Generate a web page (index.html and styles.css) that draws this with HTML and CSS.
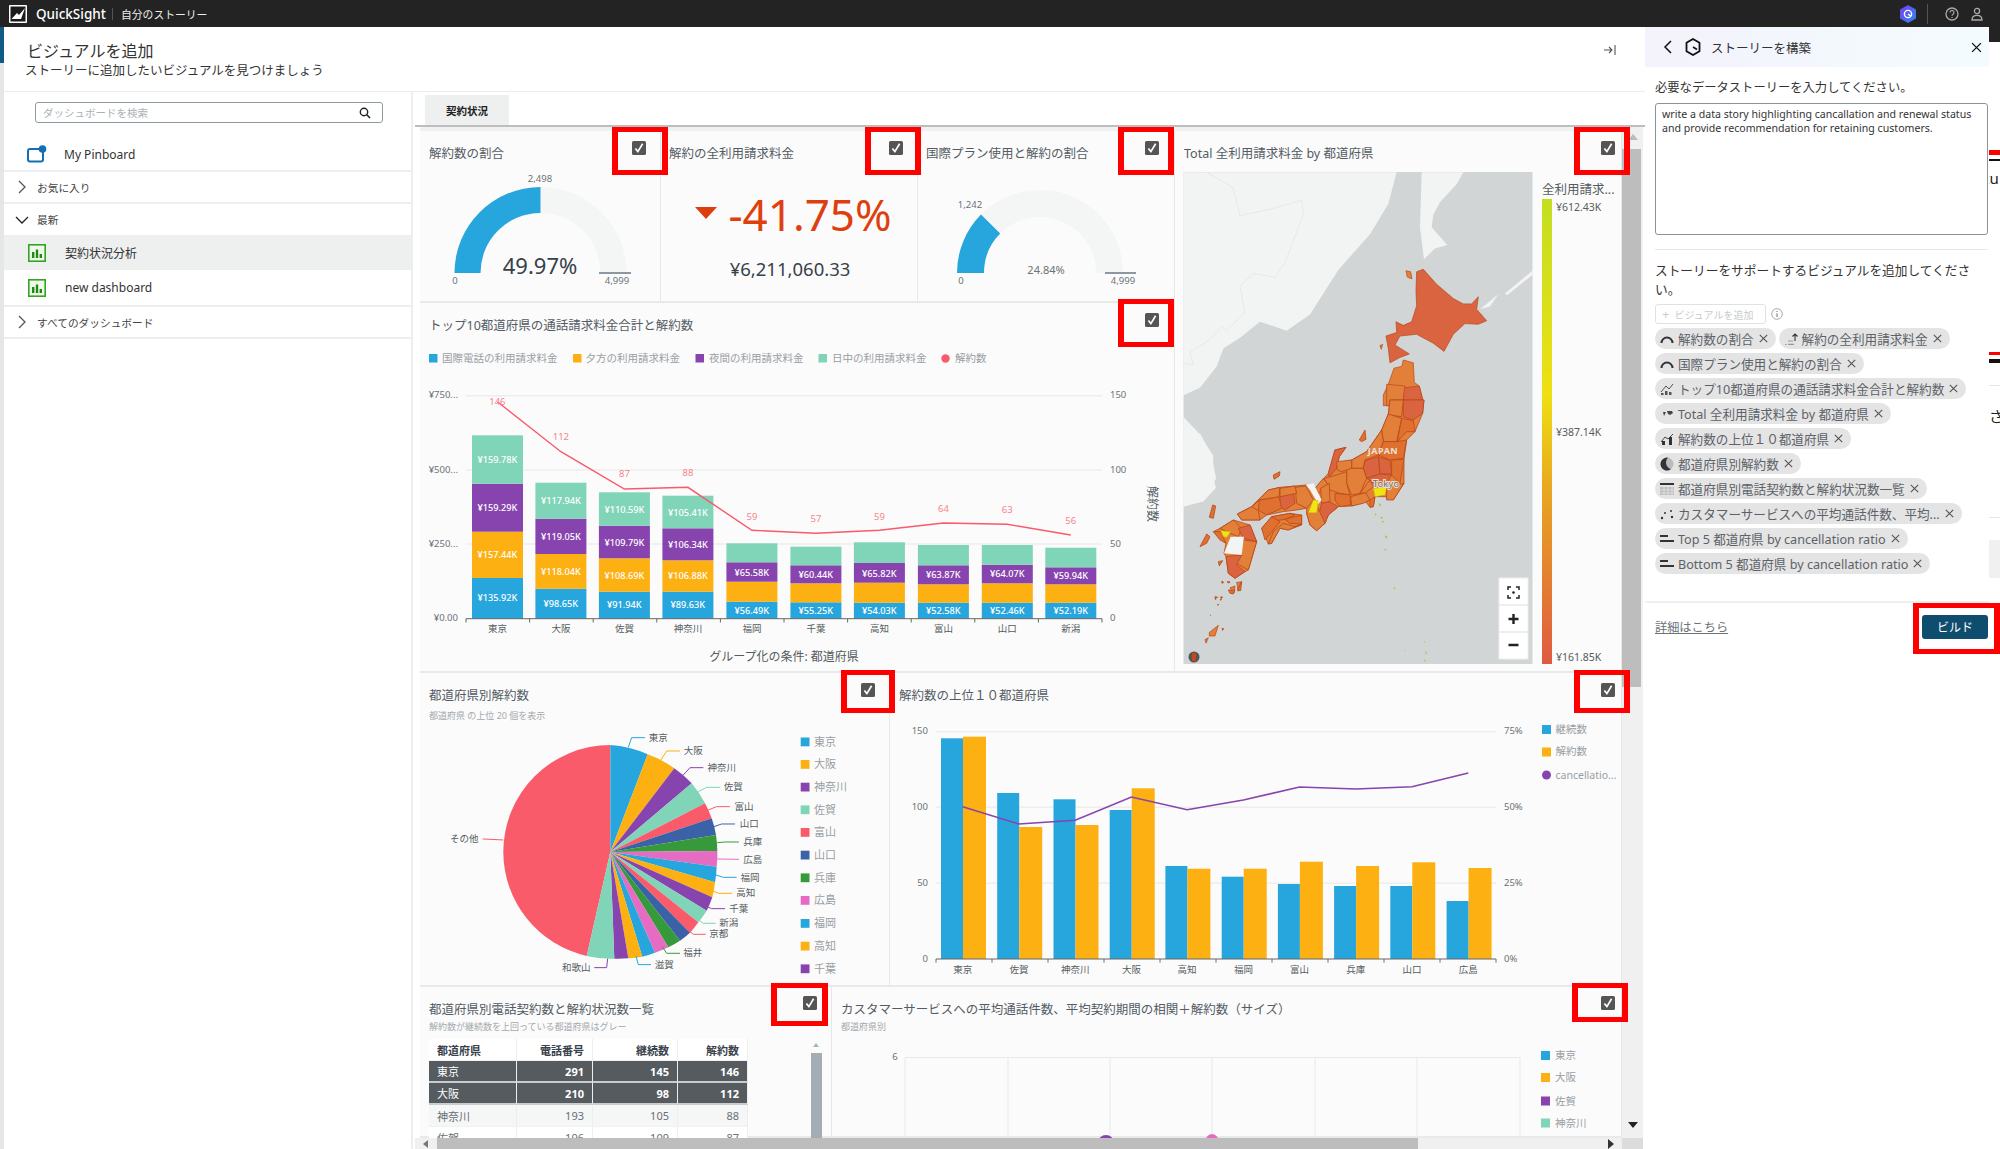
FILE: index.html
```html
<!DOCTYPE html>
<html lang="ja">
<head>
<meta charset="utf-8">
<title>QuickSight</title>
<link rel="stylesheet" href="styles.css">
</head>
<body>
<svg class="defs" width="0" height="0"><defs>
<symbol id="x" viewBox="0 0 9 9"><path d="M.8.8l7.4 7.4M8.2.8L.8 8.2" fill="none" stroke="#555" stroke-width="1.1"/></symbol>
<symbol id="chev" viewBox="0 0 10 14"><path d="M2 1l6 6-6 6" fill="none" stroke="#555" stroke-width="1.3"/></symbol>
<symbol id="chevd" viewBox="0 0 14 10"><path d="M1 2l6 6 6-6" fill="none" stroke="#222" stroke-width="1.3"/></symbol>
<symbol id="dash" viewBox="0 0 18 18"><rect x=".8" y=".8" width="16.4" height="16.4" fill="#f1f8ec" stroke="#2fa81e" stroke-width="1.6"/><path d="M4 8h2.4v6H4zM7.8 5.5h2.4V14H7.8zM11.6 10H14v4h-2.4z" fill="#1f8a12"/></symbol>
<symbol id="gauge" viewBox="0 0 14 14"><path d="M1.5 11A5.5 5.5 0 0 1 12.5 11" fill="none" stroke="#333" stroke-width="2"/></symbol>
<symbol id="hbars" viewBox="0 0 14 14"><path d="M0 3h8v2H0zM0 8h14v2H0z" fill="#333"/></symbol>
<symbol id="check" viewBox="0 0 14 14"><rect width="14" height="14" rx="1.6" fill="#555"/><path d="M3.4 7.4l2.5 3.2L10.6 2.8" fill="none" stroke="#fff" stroke-width="1.7"/></symbol>
</defs></svg>

<div class="app">
  <header class="topbar">
    <svg class="logo" viewBox="0 0 18 18" width="18" height="18"><rect width="18" height="18" rx="1" fill="#fff"/><rect x="1.5" y="1.5" width="15" height="15" fill="#1b1b1b"/><path d="M2.5 14L8 8l2 2 6-7-4 11z" fill="#fff"/></svg>
    <span class="brand">QuickSight</span>
    <span class="bar-sep"></span>
    <span class="crumb">自分のストーリー</span>
    <span class="bar-fill"></span>
    <svg class="q-icon" viewBox="0 0 16 18" width="16" height="18"><defs><linearGradient id="qg" x1="0" y1="0" x2="1" y2="1"><stop offset="0" stop-color="#7a3cf0"/><stop offset="1" stop-color="#2a8bf0"/></linearGradient></defs><path d="M8 0l8 4.500v9L8 18l-8-4.500v-9z" fill="url(#qg)"/><circle cx="8" cy="9" r="3.600" fill="none" stroke="#fff" stroke-width="1.400"/><path d="M8 9l3 2.400" stroke="#fff" stroke-width="1.400"/></svg>
    <span class="bar-sep2"></span>
    <svg class="b-icon" viewBox="0 0 14 14" width="14" height="14"><circle cx="7" cy="7" r="6" fill="none" stroke="#aaa" stroke-width="1.300"/><path d="M5 5.400a2 2 0 1 1 3 1.800c-.7.400-1 .8-1 1.600M7 10v1" fill="none" stroke="#aaa" stroke-width="1.200"/></svg>
    <svg class="b-icon" viewBox="0 0 14 14" width="14" height="14"><circle cx="7" cy="4" r="2.600" fill="none" stroke="#aaa" stroke-width="1.300"/><path d="M2 13c0-3 2-4.600 5-4.600s5 1.600 5 4.600z" fill="none" stroke="#aaa" stroke-width="1.300"/></svg>
  </header>

  <div class="shell">
    <div class="edge"><div class="edge-blue"></div></div>

    <div class="workspace">
      <div class="head">
        <div>
          <h1>ビジュアルを追加</h1>
          <p>ストーリーに追加したいビジュアルを見つけましょう</p>
        </div>
        <svg class="collapse" viewBox="0 0 14 12" width="14" height="12"><path d="M1 6h8M6 3l3 3-3 3M12 1v10" fill="none" stroke="#555" stroke-width="1.100"/></svg>
      </div>

      <div class="body">
        <aside class="side">
          <div class="search">
            <span>ダッシュボードを検索</span>
            <svg viewBox="0 0 12 12" width="12" height="12"><circle cx="5" cy="5" r="3.700" fill="none" stroke="#222" stroke-width="1.400"/><path d="M7.800 7.800L11 11" stroke="#222" stroke-width="1.600"/></svg>
          </div>
          <div class="row row-pin">
            <svg class="ico" viewBox="0 0 20 18" width="20" height="18"><rect x="1" y="4" width="15" height="12.500" rx="2" fill="none" stroke="#146eb4" stroke-width="2"/><circle cx="15.500" cy="4" r="3.800" fill="#146eb4"/></svg>
            <span class="lg">My Pinboard</span>
          </div>
          <div class="row row-sec"><svg class="ch" width="10" height="14"><use href="#chev"/></svg><span>お気に入り</span></div>
          <div class="row row-sec row-open"><svg class="chd" width="14" height="10"><use href="#chevd"/></svg><span>最新</span></div>
          <div class="row row-dash is-sel"><svg class="ico" width="18" height="18"><use href="#dash"/></svg><span class="lg">契約状況分析</span></div>
          <div class="row row-dash row-end"><svg class="ico" width="18" height="18"><use href="#dash"/></svg><span class="lg">new dashboard</span></div>
          <div class="row row-sec"><svg class="ch" width="10" height="14"><use href="#chev"/></svg><span>すべてのダッシュボード</span></div>
        </aside>

        <main class="main">
          <div class="tabs"><div class="tab">契約状況</div></div>
          <div class="canvas">
            <div class="sheet">
              <div class="top">
                <div class="top-left">
                  <div class="kpis">
                    <section class="tile t-g1">
                      <h2>解約数の割合</h2>
                      <div class="pick p1"><svg width="14" height="14"><use href="#check"/></svg></div>
                      <svg class="chart" viewBox="420 162 241 139" width="241" height="139">
                        <path class="track" d="M540.500 187A86 86 0 0 1 626.500 273H600.500A60 60 0 0 0 540.500 213Z"/>
                        <path class="f-blue" d="M454.500 273A86 86 0 0 1 540.500 187V213A60 60 0 0 0 480.500 273Z"/>
                        <path class="endline" d="M599 273h32"/>
                        <text class="t-xs" x="540" y="179" text-anchor="middle" dy=".35em">2,498</text>
                        <text class="t-xs" x="455" y="281" text-anchor="middle" dy=".35em">0</text>
                        <text class="t-xs" x="617" y="281" text-anchor="middle" dy=".35em">4,999</text>
                        <text class="t-val" x="540" y="266" text-anchor="middle" dy=".35em">49.97%</text>
                      </svg>
                    </section>
                    <section class="tile t-g2">
                      <h2>解約の全利用請求料金</h2>
                      <div class="pick p2"><svg width="14" height="14"><use href="#check"/></svg></div>
                      <svg class="chart" viewBox="661 162 257 139" width="257" height="139">
                        <path class="f-down" d="M695 207h22l-11 12z"/>
                        <text class="t-kpi" x="810" y="216" text-anchor="middle" dy=".35em">-41.75%</text>
                        <text class="t-kpi2" x="790" y="270" text-anchor="middle" dy=".35em">¥6,211,060.33</text>
                      </svg>
                    </section>
                    <section class="tile t-g3">
                      <h2>国際プラン使用と解約の割合</h2>
                      <div class="pick p3"><svg width="14" height="14"><use href="#check"/></svg></div>
                      <svg class="chart" viewBox="918 162 257 139" width="257" height="139">
                        <path class="track" d="M981 214.600A83 83 0 0 1 1123 273H1096A56 56 0 0 0 1000.200 233.600Z"/>
                        <path class="f-blue" d="M957 273A83 83 0 0 1 981 214.600L1000.200 233.600A56 56 0 0 0 984 273Z"/>
                        <path class="endline" d="M1105 273h31"/>
                        <text class="t-xs" x="970" y="205" text-anchor="middle" dy=".35em">1,242</text>
                        <text class="t-xs" x="961" y="281" text-anchor="middle" dy=".35em">0</text>
                        <text class="t-xs" x="1123" y="281" text-anchor="middle" dy=".35em">4,999</text>
                        <text class="t-sm" x="1046" y="270" text-anchor="middle" dy=".35em">24.84%</text>
                      </svg>
                    </section>
                  </div>

                  <section class="tile t-combo">
                    <h2>トップ10都道府県の通話請求料金合計と解約数</h2>
                    <div class="pick p4"><svg width="14" height="14"><use href="#check"/></svg></div>
                    <svg class="chart" viewBox="420 334 755 338" width="755" height="338">
                      <g class="leg">
                        <rect class="f-blue" x="429" y="354" width="8.500" height="8.500"/><text x="442" y="358" dy=".35em">国際電話の利用請求料金</text>
                        <rect class="f-orange" x="573" y="354" width="8.500" height="8.500"/><text x="585.500" y="358" dy=".35em">夕方の利用請求料金</text>
                        <rect class="f-purple" x="695.500" y="354" width="8.500" height="8.500"/><text x="709" y="358" dy=".35em">夜間の利用請求料金</text>
                        <rect class="f-mint" x="818.500" y="354" width="8.500" height="8.500"/><text x="832" y="358" dy=".35em">日中の利用請求料金</text>
                        <circle class="f-red" cx="945.500" cy="358.500" r="4.200"/><text x="955" y="358" dy=".35em">解約数</text>
                      </g>
                      <path class="grid" d="M466 395.700H1102M466 470H1102M466 544H1102"/>
                      <g class="bar-set">
                        <rect class="f-blue" x="472" y="578" width="51" height="40.700"/><rect class="f-orange" x="472" y="531.700" width="51" height="46.300"/><rect class="f-purple" x="472" y="483.700" width="51" height="48"/><rect class="f-mint" x="472" y="435.300" width="51" height="48.400"/>
                        <rect class="f-blue" x="535.400" y="588.700" width="51" height="30"/><rect class="f-orange" x="535.400" y="554" width="51" height="34.700"/><rect class="f-purple" x="535.400" y="518.700" width="51" height="35.300"/><rect class="f-mint" x="535.400" y="482.700" width="51" height="36"/>
                        <rect class="f-blue" x="598.900" y="591.700" width="51" height="27"/><rect class="f-orange" x="598.900" y="558.300" width="51" height="33.400"/><rect class="f-purple" x="598.900" y="525.700" width="51" height="32.600"/><rect class="f-mint" x="598.900" y="492.300" width="51" height="33.400"/>
                        <rect class="f-blue" x="662.400" y="591.700" width="51" height="27"/><rect class="f-orange" x="662.400" y="560.300" width="51" height="31.400"/><rect class="f-purple" x="662.400" y="528.300" width="51" height="32"/><rect class="f-mint" x="662.400" y="495.700" width="51" height="32.600"/>
                        <rect class="f-blue" x="726.400" y="601.700" width="51" height="17"/><rect class="f-orange" x="726.400" y="581.700" width="51" height="20"/><rect class="f-purple" x="726.400" y="562.300" width="51" height="19.400"/><rect class="f-mint" x="726.400" y="543.300" width="51" height="19"/>
                        <rect class="f-blue" x="790.400" y="602.300" width="51" height="16.400"/><rect class="f-orange" x="790.400" y="583.300" width="51" height="19"/><rect class="f-purple" x="790.400" y="565.300" width="51" height="18"/><rect class="f-mint" x="790.400" y="546.700" width="51" height="18.600"/>
                        <rect class="f-blue" x="853.900" y="602.700" width="51" height="16"/><rect class="f-orange" x="853.900" y="582.700" width="51" height="20"/><rect class="f-purple" x="853.900" y="563" width="51" height="19.700"/><rect class="f-mint" x="853.900" y="542.300" width="51" height="20.700"/>
                        <rect class="f-blue" x="917.900" y="602.700" width="51" height="16"/><rect class="f-orange" x="917.900" y="584.300" width="51" height="18.400"/><rect class="f-purple" x="917.900" y="565.300" width="51" height="19"/><rect class="f-mint" x="917.900" y="545" width="51" height="20.300"/>
                        <rect class="f-blue" x="981.800" y="602.700" width="51" height="16"/><rect class="f-orange" x="981.800" y="583.300" width="51" height="19.400"/><rect class="f-purple" x="981.800" y="564.700" width="51" height="18.600"/><rect class="f-mint" x="981.800" y="545" width="51" height="19.700"/>
                        <rect class="f-blue" x="1045.300" y="602.700" width="51" height="16"/><rect class="f-orange" x="1045.300" y="584.300" width="51" height="18.400"/><rect class="f-purple" x="1045.300" y="567.300" width="51" height="17"/><rect class="f-mint" x="1045.300" y="547.700" width="51" height="19.600"/>
                      </g>
                      <g class="bar-lab" text-anchor="middle">
                        <text x="497.400" y="598" dy=".35em">¥135.92K</text><text x="497.400" y="555" dy=".35em">¥157.44K</text><text x="497.400" y="508" dy=".35em">¥159.29K</text><text x="497.400" y="460" dy=".35em">¥159.78K</text>
                        <text x="560.900" y="603.700" dy=".35em">¥98.65K</text><text x="560.900" y="571.700" dy=".35em">¥118.04K</text><text x="560.900" y="536.300" dy=".35em">¥119.05K</text><text x="560.900" y="501" dy=".35em">¥117.94K</text>
                        <text x="624.400" y="604.300" dy=".35em">¥91.94K</text><text x="624.400" y="575.300" dy=".35em">¥108.69K</text><text x="624.400" y="542.300" dy=".35em">¥109.79K</text><text x="624.400" y="509.300" dy=".35em">¥110.59K</text>
                        <text x="687.900" y="605" dy=".35em">¥89.63K</text><text x="687.900" y="576" dy=".35em">¥106.88K</text><text x="687.900" y="544.300" dy=".35em">¥106.34K</text><text x="687.900" y="512.700" dy=".35em">¥105.41K</text>
                        <text x="751.900" y="610.700" dy=".35em">¥56.49K</text><text x="751.900" y="572.300" dy=".35em">¥65.58K</text>
                        <text x="815.900" y="610.700" dy=".35em">¥55.25K</text><text x="815.900" y="574.700" dy=".35em">¥60.44K</text>
                        <text x="879.400" y="610.700" dy=".35em">¥54.03K</text><text x="879.400" y="573.300" dy=".35em">¥65.82K</text>
                        <text x="943.400" y="610.700" dy=".35em">¥52.58K</text><text x="943.400" y="574.700" dy=".35em">¥63.87K</text>
                        <text x="1007.300" y="610.700" dy=".35em">¥52.46K</text><text x="1007.300" y="574" dy=".35em">¥64.07K</text>
                        <text x="1070.800" y="610.700" dy=".35em">¥52.19K</text><text x="1070.800" y="576" dy=".35em">¥59.94K</text>
                      </g>
                      <polyline class="line-red" points="497.400,401.700 560.900,451.700 624.400,489 687.900,487.300 751.900,530.300 815.900,533.300 879.400,530.300 943.400,523 1007.300,524.300 1070.800,535"/>
                      <g class="line-lab" text-anchor="middle">
                        <text x="497.400" y="402" dy=".35em">146</text><text x="560.900" y="437" dy=".35em">112</text><text x="624.400" y="474" dy=".35em">87</text><text x="687.900" y="473" dy=".35em">88</text><text x="751.900" y="517" dy=".35em">59</text><text x="815.900" y="519" dy=".35em">57</text><text x="879.400" y="517" dy=".35em">59</text><text x="943.400" y="509" dy=".35em">64</text><text x="1007.300" y="510" dy=".35em">63</text><text x="1070.800" y="521" dy=".35em">56</text>
                      </g>
                      <path class="axis" d="M466 622.500v-3.800H1102v3.800M529.600 618.700v3.800M593.200 618.700v3.800M656.800 618.700v3.800M720.400 618.700v3.800M784 618.700v3.800M847.600 618.700v3.800M911.200 618.700v3.800M974.800 618.700v3.800M1038.400 618.700v3.800"/>
                      <g class="cat" text-anchor="middle">
                        <text x="497.400" y="629" dy=".35em">東京</text><text x="560.900" y="629" dy=".35em">大阪</text><text x="624.400" y="629" dy=".35em">佐賀</text><text x="687.900" y="629" dy=".35em">神奈川</text><text x="751.900" y="629" dy=".35em">福岡</text><text x="815.900" y="629" dy=".35em">千葉</text><text x="879.400" y="629" dy=".35em">高知</text><text x="943.400" y="629" dy=".35em">富山</text><text x="1007.300" y="629" dy=".35em">山口</text><text x="1070.800" y="629" dy=".35em">新潟</text>
                      </g>
                      <g class="t-xs" text-anchor="end">
                        <text x="458" y="395" dy=".35em">¥750...</text><text x="458" y="470" dy=".35em">¥500...</text><text x="458" y="544" dy=".35em">¥250...</text><text x="458" y="618" dy=".35em">¥0.00</text>
                      </g>
                      <g class="t-xs">
                        <text x="1110" y="395" dy=".35em">150</text><text x="1110" y="470" dy=".35em">100</text><text x="1110" y="544" dy=".35em">50</text><text x="1110" y="618" dy=".35em">0</text>
                      </g>
                      <text class="t-side" transform="translate(1152 504) rotate(90)" text-anchor="middle" dy=".35em">解約数</text>
                      <text class="t-group" x="784" y="657" text-anchor="middle" dy=".35em">グループ化の条件: 都道府県</text>
                    </svg>
                  </section>
                </div>

                <section class="tile t-map">
                  <h2>Total 全利用請求料金 by 都道府県</h2>
                  <div class="pick p5"><svg width="14" height="14"><use href="#check"/></svg></div>
                  <svg class="chart" viewBox="1175 162 447 510" width="447" height="510">
                    <defs>
                      <clipPath id="mapclip"><rect x="1183.300" y="172" width="349.400" height="492"/></clipPath>
                      <linearGradient id="heat" x1="0" y1="0" x2="0" y2="1"><stop offset="0" stop-color="#c3de22"/><stop offset=".42" stop-color="#eee011"/><stop offset=".62" stop-color="#e8a820"/><stop offset="1" stop-color="#e05a42"/></linearGradient>
                    </defs>
                    <g clip-path="url(#mapclip)">
                      <rect x="1183.300" y="172" width="349.400" height="492" fill="#d1d5d6"/>
                      <g transform="translate(1170 120) scale(.3333 .3571)">
                        <g class="land">
                          <path d="M30 146H680L655 235 600 320 505 420 420 545 350 590 270 565 210 610 160 640 140 690 90 750 30 775Z"/>
                          <path d="M755 146H880L860 180 810 230 790 265 785 300 832 350 795 360 762 390 750 300Z"/>
                          <path d="M930 530L985 488 960 522ZM1005 486L1090 420V432L1012 490Z"/>
                          <path d="M30 822L80 870 130 940 128 1000 138 1030 100 1068 30 1085Z"/>
                        </g>
                        <path class="border" d="M110 146L190 190 210 268 300 250 395 225 400 265 345 400 315 440 250 430 210 465 225 540 170 590 155 580 120 615 60 650 70 685 30 680"/>
                        <g class="pref">
                          <path class="p-red" d="M740 425L760 418 800 460 850 500 880 515 905 515 925 495 920 530 950 562 925 572 885 570 850 600 822 648 790 625 740 600 690 605 675 630 718 655 690 665 660 680 655 640 648 605 680 595 678 565 700 575 725 565 740 520 738 480Z"/>
                          <path class="p-org" d="M672 695L695 690 700 672 730 680 733 735 748 745 760 790 755 800 640 800 640 770 655 740Z"/>
                          <path class="p-red" d="M703 750L748 745 760 790 755 800 697 800Z"/>
                          <path class="p-org" d="M650 740L705 745 697 800 650 800Z"/>
                          <path class="p-org" d="M180 1310L195 1305 192 1325ZM200 1295L215 1293 205 1320ZM118 1435L145 1415 135 1445 118 1445ZM105 1455L115 1450 108 1465Z"/>
                          <path class="p-org" d="M630 632L638 628 634 642ZM708 422L722 425 726 445 712 440Z"/>
                        </g>
                        <g fill="#a7c52c">
                          <path d="M672 1310l5 1-3 3zM703 1484l4 1-2 3zM762 1460l4 1-2 3zM766 1486l5 8-4 2zM762 1510l6 4-3 4z"/>
                        </g>
                        <path fill="#c44a1c" d="M135 1340l4 2-3 3zM150 1340l6 2-5 5zM142 1355l6 1-5 5zM120 1385l4 2-3 2zM155 1422l8 3-6 6zM155 1290l5 1-3 3zM175 1292l6 2-4 2z"/>
                      </g>
                      <g transform="translate(1200 400) scale(.3333)">
                        <g class="land"><path d="M-60 100L0 100 35 165 48 235 25 285-60 310Z"/></g>
                        <g class="pref pref-c">
                          <path class="p-org" d="M570 0H672L668 40 645 95 620 120 612 178 612 250 580 300 555 290 525 290 520 320 510 322 497 305 455 318 415 320 385 345 375 370 350 392 330 375 320 340 320 325 290 330 250 335 200 345 180 360 125 360 112 342 155 320 205 270 240 262 285 258 318 255 345 265 372 235 385 220 405 150 438 142 418 170 412 190 455 180 500 155 545 90 565 42Z"/>
                          <path class="p-org" d="M60 385L100 360 150 375 170 425 145 510 135 515 105 535 85 520 78 470 72 460 78 430 40 395Z"/>
                          <path class="p-org" d="M185 385L215 350 270 340 305 345 305 375 265 390 240 385 215 430 205 432Z"/>
                          <path class="p-red" d="M610 0H672L668 40 640 60 610 50Z"/>
                          <path class="p-org" d="M570 0H610L605 50 565 45Z"/>
                          <path class="p-org" d="M565 42L605 55 590 125 550 125 545 90Z"/>
                          <path class="p-dk" d="M605 55L640 62 645 95 620 95 592 125Z"/>
                          <path class="p-org" d="M455 180L500 155 545 90 550 125 535 165 495 180 490 205 455 205Z"/>
                          <path class="p-dk" d="M550 125H592L620 120 610 175 570 180 535 165Z"/>
                          <path class="p-red" d="M535 170L570 182 575 222 540 222Z"/>
                          <path class="p-dk" d="M575 180L612 178 600 250 575 225Z"/>
                          <path class="p-red" d="M495 182L535 170 540 222 500 235 490 205Z"/>
                          <path class="p-org" d="M440 205H490L500 235 480 280 455 285 440 250Z"/>
                          <path class="p-red" d="M405 150L438 142 418 170 410 205 388 230 385 220Z"/>
                          <path class="p-org" d="M410 185L455 180 455 205 425 215 412 210Z"/>
                          <path class="p-org" d="M372 235L410 225 440 215 440 250 450 285 420 280 390 270Z"/>
                          <path class="p-org" d="M345 265L370 235 385 255 355 280Z"/>
                          <path class="p-org" d="M362 265L388 250 390 305 365 310Z"/>
                          <path class="p-dk" d="M405 280L450 285 452 315 420 320 405 300Z"/>
                          <path class="p-org" d="M452 290L497 278 510 300 490 310 455 318Z"/>
                          <path class="p-org" d="M480 280L510 240 520 260 497 278Z"/>
                          <path class="p-red" d="M500 235L540 222 575 225 560 250 520 250 510 240Z"/>
                          <path class="p-org" d="M560 265L612 250 580 300 560 300Z"/>
                          <path class="p-dk" d="M510 300L525 290 520 320 510 322Z"/>
                          <path class="p-red" d="M388 305L415 320 385 345 375 370 355 350 365 310Z"/>
                          <path class="p-org" d="M320 340L352 320 375 370 350 392 330 375Z"/>
                          <path class="p-org" d="M285 262L318 258 340 300 320 325 290 310Z"/>
                          <path class="p-red" d="M240 290L280 280 285 310 255 330 240 320Z"/>
                          <path class="p-dk" d="M178 300L237 290 245 325 200 345 175 330Z"/>
                          <path class="p-org" d="M155 320L205 270 240 262 237 290 178 300Z"/>
                          <path class="p-org" d="M240 265L285 258 290 280 240 290Z"/>
                          <path class="p-org" d="M112 342L155 320 175 332 180 360 125 360Z"/>
                          <path class="p-dk" d="M215 350L270 340 285 345 255 358 210 365Z"/>
                          <path class="p-dk" d="M185 385L215 350 240 365 195 420Z"/>
                          <path class="p-org" d="M205 432L220 395 250 370 285 380 305 372 265 390 240 385 215 430Z"/>
                          <path class="p-dk" d="M255 358L305 345 305 372 270 370Z"/>
                          <path class="p-org" d="M60 385L100 360 125 385 115 410 90 400Z"/>
                          <path class="p-dk" d="M40 395L62 395 78 430 60 420Z"/>
                          <path class="p-red" d="M115 385L150 375 170 425 130 415Z"/>
                          <path class="p-org" d="M130 420L170 425 145 510 110 490Z"/>
                          <path class="p-red" d="M78 470L125 465 110 495 135 515 105 535 85 520Z"/>
                          <path class="p-dk" d="M0 440L20 402 30 410 20 430ZM28 352L38 315 47 318 40 355ZM220 225L240 215 238 228 222 238ZM478 120L495 90 498 118 485 125ZM85 570H105L100 582 90 580ZM112 570L125 545 122 572Z"/>
                          <path class="p-dk" d="M55 485L68 482 58 498ZM45 590l8 2-8 4zM62 590l6 2-4 4zM65 545l6 2-5 3zM82 545l8 1-6 3z"/>
                        </g>
                        <g fill="#f3f4f4">
                          <path d="M318 255L340 250 365 300 355 312 330 270Z"/>
                          <path d="M92 410H132L125 465 72 460Z"/>
                        </g>
                        <g fill="#efe512" stroke="#d1a912" stroke-width="1.500">
                          <path d="M340 300L355 302 350 338 325 338Z"/>
                          <path d="M62 392L92 395 80 412 70 410Z"/>
                          <path d="M520 265L560 262 555 285 525 290Z"/>
                        </g>
                        <path fill="#a7c52c" d="M535 310l8 2-3 8zM525 340l5 2-4 6zM541 350l8 2-4 6zM546 362l6 2-4 6zM555 406l8 4-6 6zM553 446l6 2-3 5zM581 562l5 2-3 4z"/>
                      </g>
                      <text class="map-japan" x="1383" y="451" text-anchor="middle" dy=".35em">JAPAN</text>
                      <text class="map-tokyo" x="1386" y="484" text-anchor="middle" dy=".35em">Tokyo</text>
                      <circle cx="1194" cy="657" r="5.500" fill="#555"/>
                      <path d="M1192 653h4v8h-4z" fill="#c4481c"/>
                    </g>
                    <rect class="zoom-box" x="1499" y="578" width="29" height="81"/>
                    <path class="zoom-sep" d="M1499 605h29M1499 632h29"/>
                    <path class="zoom-ic" d="M1508 590v-3h3M1516 587h3v3M1519 595v3h-3M1511 598h-3v-3"/>
                    <circle cx="1513.500" cy="592.500" r="1.300" fill="#222"/>
                    <path class="zoom-big" d="M1513.500 614v10M1508.500 619h10M1508.500 645h10"/>
                    <rect x="1542" y="199" width="10" height="465" fill="url(#heat)"/>
                    <text class="t-legtitle" x="1542" y="190" dy=".35em">全利用請求...</text>
                    <g class="t-heat">
                      <text x="1556" y="207" dy=".35em">¥612.43K</text><text x="1556" y="432" dy=".35em">¥387.14K</text><text x="1556" y="657" dy=".35em">¥161.85K</text>
                    </g>
                  </svg>
                </section>
              </div>

              <div class="mid">
                <section class="tile t-pie">
                  <h2>都道府県別解約数</h2>
                  <p class="sub sub-pie">都道府県 の上位 20 個を表示</p>
                  <div class="pick p6"><svg width="14" height="14"><use href="#check"/></svg></div>
                  <svg class="chart" viewBox="420 725 469 261" width="469" height="261">
                    <path class="f-red" d="M610.300 852L586.700 956A107 107 0 0 1 503.300 852A107 107 0 0 1 610.300 745Z"/>
                    <path class="f-blue" d="M610.300 852V745A107 107 0 0 1 647.700 754.300Z"/>
                    <path class="f-orange" d="M610.300 852L647.700 754.300A107 107 0 0 1 674.300 768.300Z"/>
                    <path class="f-purple" d="M610.300 852L674.300 768.300A107 107 0 0 1 691.700 783.300Z"/>
                    <path class="f-mint" d="M610.300 852L691.700 783.300A107 107 0 0 1 705 803.300Z"/>
                    <path class="f-red" d="M610.300 852L705 803.300A107 107 0 0 1 711.700 818.300Z"/>
                    <path class="f-navy" d="M610.300 852L711.700 818.300A107 107 0 0 1 716 835Z"/>
                    <path class="f-green" d="M610.300 852L716 835A107 107 0 0 1 717.300 851Z"/>
                    <path class="f-pink" d="M610.300 852L717.300 851A107 107 0 0 1 716.700 866.700Z"/>
                    <path class="f-blue" d="M610.300 852L716.700 866.700A107 107 0 0 1 715 882.300Z"/>
                    <path class="f-orange" d="M610.300 852L715 882.300A107 107 0 0 1 712.300 897.300Z"/>
                    <path class="f-purple" d="M610.300 852L712.300 897.300A107 107 0 0 1 706.700 910.700Z"/>
                    <path class="f-mint" d="M610.300 852L706.700 910.700A107 107 0 0 1 698.300 922.300Z"/>
                    <path class="f-red" d="M610.300 852L698.300 922.300A107 107 0 0 1 690 932.700Z"/>
                    <path class="f-navy" d="M610.300 852L690 932.700A107 107 0 0 1 680 940.700Z"/>
                    <path class="f-green" d="M610.300 852L680 940.700A107 107 0 0 1 668.300 947.300Z"/>
                    <path class="f-pink" d="M610.300 852L668.300 947.300A107 107 0 0 1 655 952.700Z"/>
                    <path class="f-blue" d="M610.300 852L655 952.700A107 107 0 0 1 642.300 956.700Z"/>
                    <path class="f-orange" d="M610.300 852L642.300 956.700A107 107 0 0 1 628.300 958.300Z"/>
                    <path class="f-purple" d="M610.300 852L628.300 958.300A107 107 0 0 1 614.300 958.700Z"/>
                    <path class="f-mint" d="M610.300 852L614.300 958.700A107 107 0 0 1 586.700 956Z"/>
                    <g transform="translate(415 670) scale(.3333)" class="leaders">
                      <polyline class="s-blue" points="640,232 650,203 690,203"/>
                      <polyline class="s-orange" points="738,270 755,243 795,243"/>
                      <polyline class="s-purple" points="805,315 825,293 865,293"/>
                      <polyline class="s-mint" points="850,365 875,352 915,352"/>
                      <polyline class="s-red" points="880,420 905,410 945,410"/>
                      <polyline class="s-navy" points="897,470 920,462 960,462"/>
                      <polyline class="s-green" points="907,518 930,516 972,516"/>
                      <polyline class="s-pink" points="907,567 972,568"/>
                      <polyline class="s-blue" points="903,615 925,622 965,622"/>
                      <polyline class="s-orange" points="888,660 910,670 952,670"/>
                      <polyline class="s-purple" points="865,705 890,716 930,716"/>
                      <polyline class="s-mint" points="840,742 865,760 902,760"/>
                      <polyline class="s-red" points="812,775 835,793 872,793"/>
                      <polyline class="s-green" points="742,830 755,850 795,850"/>
                      <polyline class="s-blue" points="663,858 670,884 708,884"/>
                      <polyline class="s-purple" points="578,866 575,893 538,893"/>
                      <polyline class="s-red" points="265,510 203,507"/>
                    </g>
                    <g class="cat" text-anchor="middle">
                      <text x="658.300" y="737.300" dy=".35em">東京</text><text x="693.300" y="750.700" dy=".35em">大阪</text><text x="721.700" y="767.300" dy=".35em">神奈川</text><text x="733.300" y="786.700" dy=".35em">佐賀</text><text x="744" y="806.700" dy=".35em">富山</text><text x="749.300" y="823.700" dy=".35em">山口</text><text x="752.700" y="841.700" dy=".35em">兵庫</text><text x="752.700" y="859.300" dy=".35em">広島</text><text x="750" y="877.300" dy=".35em">福岡</text><text x="745.700" y="893" dy=".35em">高知</text><text x="738.700" y="908.300" dy=".35em">千葉</text><text x="728.700" y="922.700" dy=".35em">新潟</text><text x="718.700" y="934" dy=".35em">京都</text><text x="692.700" y="952.300" dy=".35em">福井</text><text x="664.300" y="964.300" dy=".35em">滋賀</text><text x="576.300" y="967.300" dy=".35em">和歌山</text><text x="464.300" y="838.700" dy=".35em">その他</text>
                    </g>
                    <g class="leg leg-lg">
                      <rect class="f-blue" x="800.700" y="737.500" width="8.800" height="8.800"/><text x="814" y="741.700" dy=".35em">東京</text>
                      <rect class="f-orange" x="800.700" y="760" width="8.800" height="8.800"/><text x="814" y="764.300" dy=".35em">大阪</text>
                      <rect class="f-purple" x="800.700" y="782.700" width="8.800" height="8.800"/><text x="814" y="787" dy=".35em">神奈川</text>
                      <rect class="f-mint" x="800.700" y="805.400" width="8.800" height="8.800"/><text x="814" y="809.700" dy=".35em">佐賀</text>
                      <rect class="f-red" x="800.700" y="828" width="8.800" height="8.800"/><text x="814" y="832.300" dy=".35em">富山</text>
                      <rect class="f-navy" x="800.700" y="850.700" width="8.800" height="8.800"/><text x="814" y="855" dy=".35em">山口</text>
                      <rect class="f-green" x="800.700" y="873.400" width="8.800" height="8.800"/><text x="814" y="877.700" dy=".35em">兵庫</text>
                      <rect class="f-pink" x="800.700" y="896" width="8.800" height="8.800"/><text x="814" y="900.300" dy=".35em">広島</text>
                      <rect class="f-blue" x="800.700" y="919" width="8.800" height="8.800"/><text x="814" y="923.300" dy=".35em">福岡</text>
                      <rect class="f-orange" x="800.700" y="941.700" width="8.800" height="8.800"/><text x="814" y="946" dy=".35em">高知</text>
                      <rect class="f-purple" x="800.700" y="964.400" width="8.800" height="8.800"/><text x="814" y="968.700" dy=".35em">千葉</text>
                    </g>
                  </svg>
                </section>

                <section class="tile t-bars">
                  <h2>解約数の上位１０都道府県</h2>
                  <div class="pick p7"><svg width="14" height="14"><use href="#check"/></svg></div>
                  <svg class="chart" viewBox="890 704 732 282" width="732" height="282">
                    <path class="grid" d="M936 731.700H1496M936 807.300H1496M936 883.300H1496"/>
                    <g class="f-blue">
                      <rect x="941" y="738.300" width="22" height="220.700"/><rect x="997.200" y="793" width="22" height="166"/><rect x="1053.500" y="799.300" width="22" height="159.700"/><rect x="1109.700" y="810" width="22" height="149"/><rect x="1165.400" y="866" width="22" height="93"/><rect x="1221.700" y="876.700" width="22" height="82.300"/><rect x="1277.900" y="884" width="22" height="75"/><rect x="1334.100" y="886" width="22" height="73"/><rect x="1390.300" y="886" width="22" height="73"/><rect x="1446.600" y="901" width="22" height="58"/>
                    </g>
                    <g class="f-orange">
                      <rect x="963" y="736.700" width="23" height="222.300"/><rect x="1019.200" y="827" width="23" height="132"/><rect x="1075.500" y="825" width="23" height="134"/><rect x="1131.700" y="788.300" width="23" height="170.700"/><rect x="1187.400" y="868.700" width="23" height="90.300"/><rect x="1243.700" y="868.700" width="23" height="90.300"/><rect x="1299.900" y="861.700" width="23" height="97.300"/><rect x="1356.100" y="866" width="23" height="93"/><rect x="1412.300" y="862.300" width="23" height="96.700"/><rect x="1468.600" y="868" width="23" height="91"/>
                    </g>
                    <polyline class="line-purple" points="962.700,806.700 1018.900,824 1075.200,820.300 1131.400,797 1187.100,809.700 1243.400,800 1299.600,787 1355.800,789 1412,786.700 1468.300,773"/>
                    <path class="axis" d="M936 962.500v-3.500H1496v3.500M992 959v3.500M1048 959v3.500M1104 959v3.500M1160 959v3.500M1216 959v3.500M1272 959v3.500M1328 959v3.500M1384 959v3.500M1440 959v3.500"/>
                    <g class="cat" text-anchor="middle">
                      <text x="962.700" y="970" dy=".35em">東京</text><text x="1018.900" y="970" dy=".35em">佐賀</text><text x="1075.200" y="970" dy=".35em">神奈川</text><text x="1131.400" y="970" dy=".35em">大阪</text><text x="1187.100" y="970" dy=".35em">高知</text><text x="1243.400" y="970" dy=".35em">福岡</text><text x="1299.600" y="970" dy=".35em">富山</text><text x="1355.800" y="970" dy=".35em">兵庫</text><text x="1412" y="970" dy=".35em">山口</text><text x="1468.300" y="970" dy=".35em">広島</text>
                    </g>
                    <g class="t-xs" text-anchor="end">
                      <text x="928" y="731" dy=".35em">150</text><text x="928" y="807" dy=".35em">100</text><text x="928" y="883" dy=".35em">50</text><text x="928" y="959" dy=".35em">0</text>
                    </g>
                    <g class="t-xs">
                      <text x="1504" y="731" dy=".35em">75%</text><text x="1504" y="807" dy=".35em">50%</text><text x="1504" y="883" dy=".35em">25%</text><text x="1504" y="959" dy=".35em">0%</text>
                    </g>
                    <g class="leg">
                      <rect class="f-blue" x="1542" y="725" width="9" height="9"/><text x="1555.500" y="729.300" dy=".35em">継続数</text>
                      <rect class="f-orange" x="1542" y="747.500" width="9" height="9"/><text x="1555.500" y="751.700" dy=".35em">解約数</text>
                      <circle class="f-purple" cx="1546.500" cy="775" r="4.500"/><text x="1555.500" y="775" dy=".35em">cancellatio...</text>
                    </g>
                  </svg>
                </section>
              </div>

              <div class="low">
                <section class="tile t-table">
                  <h2>都道府県別電話契約数と解約状況数一覧</h2>
                  <p class="sub">解約数が継続数を上回っている都道府県はグレー</p>
                  <div class="pick p8"><svg width="14" height="14"><use href="#check"/></svg></div>
                  <div class="table-wrap">
                    <table class="grid-table">
                      <colgroup><col class="c1"><col class="c2"><col class="c3"><col class="c4"></colgroup>
                      <thead><tr><th>都道府県</th><th>電話番号</th><th>継続数</th><th>解約数</th></tr></thead>
                      <tbody>
                        <tr class="dark"><td>東京</td><td>291</td><td>145</td><td>146</td></tr>
                        <tr class="dark"><td>大阪</td><td>210</td><td>98</td><td>112</td></tr>
                        <tr class="alt"><td>神奈川</td><td>193</td><td>105</td><td>88</td></tr>
                        <tr><td>佐賀</td><td>196</td><td>109</td><td>87</td></tr>
                      </tbody>
                    </table>
                    <div class="table-scroll"><i></i><b></b></div>
                  </div>
                </section>
                <section class="tile t-scatter">
                  <h2>カスタマーサービスへの平均通話件数、平均契約期間の相関＋解約数（サイズ）</h2>
                  <p class="sub">都道府県別</p>
                  <div class="pick p9"><svg width="14" height="14"><use href="#check"/></svg></div>
                  <svg class="chart" viewBox="832 1038 790 100" width="790" height="100">
                    <path class="grid grid-thin" d="M905 1057.500H1520M905 1057.500V1138M1008 1057.500V1138M1110 1057.500V1138M1212 1057.500V1138M1315 1057.500V1138M1417 1057.500V1138M1520 1057.500V1138"/>
                    <text class="t-xs" x="895" y="1057" text-anchor="middle" dy=".35em">6</text>
                    <circle class="f-purple" cx="1106" cy="1143" r="8"/>
                    <circle class="f-pink" cx="1212" cy="1140" r="6"/>
                    <g class="leg">
                      <rect class="f-blue" x="1541" y="1051" width="9" height="9"/><text x="1555" y="1055" dy=".35em">東京</text>
                      <rect class="f-orange" x="1541" y="1073" width="9" height="9"/><text x="1555" y="1077" dy=".35em">大阪</text>
                      <rect class="f-purple" x="1541" y="1096.500" width="9" height="9"/><text x="1555" y="1101" dy=".35em">佐賀</text>
                      <rect class="f-mint" x="1541" y="1118.500" width="9" height="9"/><text x="1555" y="1123" dy=".35em">神奈川</text>
                    </g>
                  </svg>
                </section>
              </div>
            </div>
            <div class="vscroll">
              <i class="v-up"></i>
              <div class="v-thumb"></div>
              <i class="v-down"></i>
            </div>
          </div>
          <div class="hscroll">
            <i class="h-left"></i>
            <div class="h-thumb"></div>
            <i class="h-right"></i>
            <div class="h-corner"></div>
          </div>
        </main>
      </div>
    </div>

    <aside class="story">
      <div class="story-head">
        <svg class="back" viewBox="0 0 10 14" width="10" height="14"><path d="M8 1L2 7l6 6" fill="none" stroke="#111" stroke-width="1.500"/></svg>
        <svg class="hex" viewBox="0 0 16 18" width="16" height="18"><path d="M8 1l6.500 3.700v8.600L8 17l-6.500-3.700V4.700z" fill="none" stroke="#111" stroke-width="1.800"/><path d="M8 9l4 2.500" stroke="#111" stroke-width="1.600"/></svg>
        <span class="story-title">ストーリーを構築</span>
        <svg class="close" viewBox="0 0 10 10" width="11" height="11"><path d="M1 1l8 8M9 1L1 9" fill="none" stroke="#111" stroke-width="1.200"/></svg>
      </div>
      <div class="story-body">
        <label class="story-label" for="prompt">必要なデータストーリーを入力してください。</label>
        <textarea id="prompt" class="prompt" readonly>write a data story highlighting cancallation and renewal status and provide recommendation for retaining customers.</textarea>
        <hr class="story-rule">
        <p class="story-label2">ストーリーをサポートするビジュアルを追加してください。</p>
        <div class="add-line">
          <span class="add-btn"><b>+</b>ビジュアルを追加</span>
          <svg viewBox="0 0 12 12" width="12" height="12"><circle cx="6" cy="6" r="5.300" fill="none" stroke="#aaa"/><path d="M6 3v1M6 5.300V9" stroke="#888" stroke-width="1.200"/></svg>
        </div>
        <div class="chips">
          <span class="chip"><svg class="ci" width="14" height="14"><use href="#gauge"/></svg>解約数の割合<svg class="cx" width="9" height="9"><use href="#x"/></svg></span>
          <span class="chip"><svg class="ci" viewBox="0 0 14 14" width="14" height="14"><path d="M1 13h1.500v-1H1zM4 13h6v-1.200H4zM4 9.500h5V8.500H4z" fill="#999"/><path d="M11 9V2M8.500 4.500L11 2l2.500 2.500" fill="none" stroke="#333" stroke-width="1.100"/></svg>解約の全利用請求料金<svg class="cx" width="9" height="9"><use href="#x"/></svg></span>
          <span class="chip"><svg class="ci" width="14" height="14"><use href="#gauge"/></svg>国際プラン使用と解約の割合<svg class="cx" width="9" height="9"><use href="#x"/></svg></span>
          <span class="chip"><svg class="ci" viewBox="0 0 14 14" width="14" height="14"><path d="M1 10L6 4l3 3 4-5" fill="none" stroke="#555" stroke-width="1"/><path d="M1 11h2.500v2H1zM5 9h2.500v4H5zM9 10h2.500v3H9z" fill="#555"/></svg>トップ10都道府県の通話請求料金合計と解約数<svg class="cx" width="9" height="9"><use href="#x"/></svg></span>
          <span class="chip"><svg class="ci" viewBox="0 0 14 14" width="14" height="14"><path d="M1 5l2 0 1 4 2-4zM7 4h5l1 2-3 2-2-1z" fill="#444"/></svg>Total 全利用請求料金 by 都道府県<svg class="cx" width="9" height="9"><use href="#x"/></svg></span>
          <span class="chip"><svg class="ci" viewBox="0 0 14 14" width="14" height="14"><path d="M1 10L5 5l3 2 5-5" fill="none" stroke="#444"/><path d="M2 9h3v4H2zM9 5h3v8H9z" fill="#333"/></svg>解約数の上位１０都道府県<svg class="cx" width="9" height="9"><use href="#x"/></svg></span>
          <span class="chip"><svg class="ci" viewBox="0 0 14 14" width="14" height="14"><circle cx="7" cy="7" r="6.500" fill="#bbb"/><path d="M8 .6A6.500 6.500 0 1 0 11 12.200 7 7 0 0 1 8 .6z" fill="#333"/></svg>都道府県別解約数<svg class="cx" width="9" height="9"><use href="#x"/></svg></span>
          <span class="chip"><svg class="ci" viewBox="0 0 14 14" width="14" height="14"><path d="M0 1h14v2H0z" fill="#333"/><path d="M0 5h14v8H0z" fill="#bdbdbd"/><path d="M4 5v8M8 5v8M12 5v8M0 8h14M0 11h14" stroke="#e4e4e4" stroke-width=".8"/></svg>都道府県別電話契約数と解約状況数一覧<svg class="cx" width="9" height="9"><use href="#x"/></svg></span>
          <span class="chip"><svg class="ci" viewBox="0 0 14 14" width="14" height="14"><circle cx="2" cy="11" r="1.200" fill="#333"/><circle cx="5" cy="6" r="1" fill="#333"/><circle cx="11" cy="4" r="1" fill="#333"/><circle cx="12" cy="10" r="1.200" fill="#333"/></svg>カスタマーサービスへの平均通話件数、平均...<svg class="cx" width="9" height="9"><use href="#x"/></svg></span>
          <span class="chip"><svg class="ci" width="14" height="14"><use href="#hbars"/></svg>Top 5 都道府県 by cancellation ratio<svg class="cx" width="9" height="9"><use href="#x"/></svg></span>
          <span class="chip"><svg class="ci" width="14" height="14"><use href="#hbars"/></svg>Bottom 5 都道府県 by cancellation ratio<svg class="cx" width="9" height="9"><use href="#x"/></svg></span>
        </div>
      </div>
      <div class="story-foot">
        <a class="more">詳細はこちら</a>
        <button class="build">ビルド</button>
      </div>
    </aside>

    <div class="rim">
      <div class="rim-cap"></div>
      <div class="rim-red"></div>
      <div class="rim-black"></div>
      <div class="rim-tu">tu</div>
      <div class="rim-red rim-red2"></div>
      <div class="rim-black rim-black2"></div>
      <div class="rim-line"></div>
      <div class="rim-sa">さ</div>
      <div class="rim-line rim-line2"></div>
      <div class="rim-box"></div>
    </div>
  </div>
  <div class="pick-build"></div>
</div>
</body>
</html>
```

FILE: styles.css
```css
* { box-sizing: border-box; }
html, body { margin: 0; padding: 0; background: #fff; }
body { font-family: "Noto Sans", "Noto Sans CJK JP", sans-serif; color: #333; }
.defs { position: absolute; }
.app { position: relative; width: 2000px; height: 1149px; overflow: hidden; background: #fff; }

/* top bar */
.topbar { display: flex; align-items: center; height: 27px; background: #232323; color: #fff; padding-left: 9px; }
.brand { margin-left: 9px; font-size: 13.5px; font-weight: 500; width: 66px; white-space: nowrap; }
.bar-sep { width: 1px; height: 12px; background: #555; margin-left: 10px; }
.crumb { margin-left: 8px; font-size: 10.8px; color: #eee; }
.bar-fill { flex: 1; }
.q-icon { margin-right: 11px; }
.bar-sep2 { width: 1px; height: 20px; background: #555; margin-right: 17px; }
.b-icon { margin-right: 11px; }
.b-icon:last-child { margin-right: 16px; }

/* shell */
.shell { display: flex; height: 1122px; }
.edge { width: 4px; background: #e6e6e6; }
.edge-blue { height: 36px; background: #0f5b85; }
.workspace { width: 1641px; display: flex; flex-direction: column; background: #fff; }
.head { height: 65px; display: flex; justify-content: space-between; align-items: flex-start; border-bottom: 1px solid #ececec; padding: 15px 28px 0 21px; }
.head h1 { margin: 0; font-size: 16px; font-weight: 400; line-height: 19px; color: #333; padding-left: 2px; }
.head p { margin: 1px 0 0; font-size: 12.5px; line-height: 18px; color: #333; }
.collapse { margin-top: 2px; }
.body { flex: 1; display: flex; min-height: 0; }

/* sidebar */
.side { width: 409px; padding-top: 10px; border-right: 2px solid #eee; }
.search { display: flex; justify-content: space-between; align-items: center; width: 348px; height: 21px; margin-left: 31px; margin-bottom: 4px; padding: 0 11px 0 7px; border: 1px solid #8d9a9e; border-radius: 3px; font-size: 10.5px; color: #aab1b5; }
.row { display: flex; align-items: center; border-bottom: 2px solid #eee; }
.row-pin { height: 45px; padding-left: 23px; padding-top: 11px; }
.row-sec { height: 32px; padding-left: 13px; font-size: 10.7px; color: #444; }
.row-sec .ch { margin-right: 10px; }
.row-sec .chd { margin-right: 8px; margin-left: -2px; }
.row-open { border-bottom: 0; height: 31px; }
.row-dash { height: 35px; padding-left: 24px; border-bottom: 0; }
.row-end { height: 37px; border-bottom: 2px solid #eee; }
.is-sel { background: #eeefef; }
.row .ico { margin-right: 19px; flex: none; }
.row-pin .ico { margin-right: 17px; }
.lg { font-size: 12px; color: #333; }

/* main */
.main { width: 1232px; display: flex; flex-direction: column; min-height: 0; position: relative; }
.tabs { height: 35px; padding: 3px 0 0 10px; border-bottom: 2px solid #bdbdbd; margin-left: 2px; }
.tab { width: 84px; height: 30px; background: #eef0f0; font-size: 10.5px; font-weight: 700; color: #222; display: flex; align-items: center; justify-content: center; }
.canvas { flex: 1; display: flex; min-height: 0; background: #fff; padding-left: 7px; }
.sheet { width: 1202px; padding-top: 4px; flex: none; background: #f0f1f1; height: 1011px; }
.vscroll { width: 21px; position: relative; background: #f0f0f0; padding-top: 22px; }
.v-thumb { width: 19px; height: 538px; background: #bdbdbd; }
.v-up { position: absolute; left: 6px; top: 7px; border: 5px solid transparent; border-top: 0; border-bottom: 6px solid #bbb; }
.v-down { position: absolute; left: 6px; bottom: 10px; border: 5px solid transparent; border-bottom: 0; border-top: 6px solid #222; }
.hscroll { height: 11px; margin-left: 2px; margin-right: 2px; background: #f0f0f0; position: relative; padding-left: 22px; }
.h-thumb { width: 981px; height: 11px; background: #bdbdbd; }
.h-left { position: absolute; left: 8px; top: 2px; border: 4px solid transparent; border-left: 0; border-right: 5px solid #777; }
.h-right { position: absolute; left: 1193px; top: 1px; border: 5px solid transparent; border-right: 0; border-left: 6px solid #333; }
.h-corner { position: absolute; right: 0; top: 0; width: 21px; height: 11px; background: #dcdcdc; }

/* tiles */
.top { display: flex; height: 542px; }
.top-left { width: 755px; display: flex; flex-direction: column; }
.kpis { display: flex; height: 172px; }
.mid { display: flex; height: 314px; }
.low { display: flex; height: 151px; }
.tile { position: relative; background: #fbfbfb; border-right: 1px solid #e6e8e8; border-bottom: 2px solid #e8eaea; }
.tile h2 { margin: 0; padding: 14px 0 0 9px; height: 31px; font-size: 12.5px; line-height: 18px; font-weight: 400; color: #545b64; white-space: nowrap; }
.t-g1 { width: 241px; }
.t-g2, .t-g3 { width: 257px; }
.t-g2 h2, .t-g3 h2 { padding-left: 8px; }
.t-combo { width: 755px; height: 370px; }
.t-map { width: 447px; height: 542px; }
.t-pie { width: 470px; height: 314px; }
.t-bars { width: 732px; height: 314px; }
.t-table { width: 412px; }
.t-scatter { width: 790px; }
.chart { display: block; }
.sub { margin: 0; padding-left: 9px; height: 20px; line-height: 18px; font-size: 9px; color: #a4a9ad; white-space: nowrap; }
.sub-pie { margin-top: 3px; height: 18px; }

/* annotation frames */
.pick { position: absolute; z-index: 3; width: 56px; height: 48px; border: solid #f00; border-width: 5px 6px; padding-top: 9px; display: flex; }
.pick svg { display: block; }
.p1 { right: -8px; top: -4px; padding-left: 14px; }
.p2 { right: -4px; top: -4px; padding-left: 18px; }
.p3 { right: 0; top: -4px; padding-left: 21px; }
.p4 { right: 0; top: -4px; padding-left: 21px; }
.p5 { right: -9px; top: -4px; padding-left: 21px; }
.p6 { right: -6px; top: -3px; width: 54px; height: 43px; padding-left: 14px; padding-top: 8px; }
.p7 { right: -9px; top: -3px; height: 43px; padding-left: 21px; padding-top: 8px; }
.p8 { right: 3px; top: -4px; width: 57px; height: 43px; padding-left: 26px; padding-top: 8px; }
.p9 { right: -7px; top: -4px; height: 39px; padding-left: 23px; padding-top: 8px; }
.pick-build { position: absolute; left: 1913px; top: 603px; width: 87px; height: 51px; border: solid #f00; border-width: 5px 6px; z-index: 4; pointer-events: none; }

/* svg text */
svg text { font-family: "Noto Sans", "Noto Sans CJK JP", sans-serif; }
.t-xs, .t-xs text { font-size: 9.5px; fill: #6b7278; }
.t-sm { font-size: 11px; fill: #6b7278; }
.t-val { font-size: 22px; fill: #37414a; }
.t-kpi { font-size: 44px; fill: #df3f0f; }
.t-kpi2 { font-size: 18.5px; fill: #37414a; }
.f-down { fill: #dc3f0f; }
.track { fill: #f4f5f5; }
.endline { stroke: #8c97a1; stroke-width: 2; fill: none; }
.leg text { font-size: 10.5px; fill: #999ea3; }
.leg-lg text { font-size: 11px; }
.cat text { font-size: 9.5px; fill: #555b60; }
.bar-lab text { font-size: 9.2px; font-weight: 500; fill: #fff; }
.line-lab text { font-size: 9.5px; fill: #f7838f; }
.line-red { fill: none; stroke: #f9596b; stroke-width: 1.4; }
.line-purple { fill: none; stroke: #8743ae; stroke-width: 1.6; }
.grid { fill: none; stroke: #eeeeee; stroke-width: 1.4; }
.grid-thin { stroke-width: 1; stroke: #e9e9e9; }
.axis { fill: none; stroke: #666; stroke-width: 1; }
.t-side { font-size: 12px; fill: #555b60; }
.t-group { font-size: 12px; fill: #555b60; }
.t-legtitle { font-size: 12.5px; fill: #555b60; }
.t-heat text { font-size: 10.5px; fill: #555b60; }
.f-blue { fill: #27a5dd; }
.f-orange { fill: #fdb012; }
.f-purple { fill: #8743ae; }
.f-mint { fill: #80d4b7; }
.f-red { fill: #f95b6b; }
.f-navy { fill: #3b62a6; }
.f-green { fill: #379a3a; }
.f-pink { fill: #e66cc3; }
.leaders polyline { fill: none; stroke-width: 3; }
.s-blue { stroke: #27a5dd; }
.s-orange { stroke: #fdb012; }
.s-purple { stroke: #8743ae; }
.s-mint { stroke: #80d4b7; }
.s-red { stroke: #f95b6b; }
.s-navy { stroke: #3b62a6; }
.s-green { stroke: #379a3a; }
.s-pink { stroke: #e66cc3; }

/* map */
.land path { fill: #f2f3f3; }
.border { fill: none; stroke: #e2e4e4; stroke-width: 2; }
.pref path { stroke: #b9471a; stroke-width: 2; stroke-linejoin: round; }
.pref-c path { stroke-width: 2.400; }
.p-red { fill: #da6440; }
.p-org { fill: #e27f38; }
.p-dk { fill: #e0702f; }
.map-japan { font-size: 9px; font-weight: 700; letter-spacing: .5px; fill: #efe0d8; }
.map-tokyo { font-size: 9px; letter-spacing: .4px; fill: #67727a; stroke: #f3dcc8; stroke-width: 2; paint-order: stroke; }
.zoom-box { fill: #fff; stroke: #eee; }
.zoom-sep { stroke: #ddd; fill: none; }
.zoom-ic { fill: none; stroke: #222; stroke-width: 1.5; }
.zoom-big { fill: none; stroke: #222; stroke-width: 2.4; }

/* table */
.table-wrap { display: flex; align-items: flex-start; margin-left: 9px; margin-top: 1px; height: 99px; overflow: hidden; }
.grid-table { width: 319px; flex: none; border-collapse: separate; border-spacing: 0; table-layout: fixed; font-size: 11px; }
.c1 { width: 88px; }
.c2 { width: 76px; }
.c3 { width: 85px; }
.c4 { width: 70px; }
.grid-table th, .grid-table td { height: 22px; padding: 0 8px; text-align: right; border-right: 1px solid #eee; border-bottom: 1px solid #f1f1f1; background: #fff; white-space: nowrap; }
.grid-table th { font-weight: 700; color: #37414a; }
.grid-table th:first-child, .grid-table td:first-child { text-align: left; }
.grid-table td { color: #687078; }
.grid-table .dark td { background: #555b5f; color: #fff; font-weight: 700; border-right-color: #eee; border-bottom: 2px solid #c9cdd0; }
.grid-table .dark td:first-child { font-weight: 400; }
.grid-table .alt td { background: #f5f6f6; }
.table-scroll { margin-left: 63px; width: 11px; position: relative; padding-top: 14px; flex: none; }
.table-scroll i { position: absolute; left: 2px; top: 4px; border: 3.500px solid transparent; border-top: 0; border-bottom: 4px solid #aab3b8; }
.table-scroll b { display: block; height: 90px; background: #a4adb3; }

/* story */
.story { width: 344px; background: #fff; display: flex; flex-direction: column; }
.story-head { height: 40px; background: linear-gradient(90deg, #f4f2fb 0%, #f3f8fd 55%, #f4fbfe 100%); display: flex; align-items: center; padding-left: 18px; }
.back { margin-right: 12px; }
.hex { margin-right: 10px; }
.story-title { font-size: 12.5px; color: #333; flex: 1; }
.close { margin-right: 7px; }
.story-body { padding: 12px 1px 0 10px; height: 534px; }
.story-label { display: block; font-size: 12.3px; line-height: 18px; color: #333; }
.prompt { display: block; width: 333px; height: 132px; margin-top: 6px; padding: 3px 6px; border: 1px solid #879596; border-radius: 3px; resize: none; font-family: "Noto Sans", "Noto Sans CJK JP", sans-serif; font-size: 10.6px; line-height: 14px; color: #333; overflow: hidden; background: #fff; }
.story-rule { margin: 14px 0 11px; border: 0; border-top: 1px solid #e8e8e8; }
.story-label2 { margin: 0; font-size: 12.7px; line-height: 19px; color: #333; }
.add-line { display: flex; align-items: center; gap: 5px; margin-top: 5px; }
.add-btn { display: flex; align-items: center; width: 111px; height: 20px; padding-left: 6px; border: 1px solid #dfe2e2; border-radius: 3px; font-size: 10px; color: #c9cccc; }
.add-btn b { font-weight: 400; font-size: 13px; margin-right: 5px; }
.chips { display: flex; flex-wrap: wrap; gap: 4px 3px; margin-top: 4px; }
.chip { display: inline-flex; align-items: center; height: 21px; padding: 0 8px 0 5px; border-radius: 11px; background: #e4e4e4; font-size: 12.6px; color: #5c6268; white-space: nowrap; }
.ci { margin-right: 4px; flex: none; }
.cx { margin-left: 5px; flex: none; }
.story-foot { display: flex; justify-content: space-between; align-items: center; border-top: 2px solid #efefef; height: 56px; padding: 0 1px 6px 10px; }
.more { font-size: 12.2px; color: #6b7278; text-decoration: underline; }
.build { width: 66px; height: 24px; border: 0; border-radius: 3px; background: #0f4d6f; color: #fff; font-family: inherit; font-size: 12px; padding: 0; }

/* right rim: the page behind the panel */
.rim { width: 11px; overflow: hidden; font-size: 15px; color: #222; background: #fff; }
.rim-cap { height: 15px; background: #232323; }
.rim-red { height: 5px; margin-top: 108px; background: #f00; }
.rim-black { height: 2px; margin-top: 4px; background: #111; }
.rim-tu { height: 22px; margin-top: 6px; line-height: 22px; margin-left: -5px; }
.rim-red2 { height: 3px; margin-top: 163px; }
.rim-black2 { height: 4px; }
.rim-line { height: 1px; margin-top: 22px; background: #e6e6e6; }
.rim-sa { height: 22px; line-height: 22px; margin-top: 19px; }
.rim-line2 { margin-top: 90px; }
.rim-box { height: 38px; margin-top: 22px; background: #f0f0f0; }
```
